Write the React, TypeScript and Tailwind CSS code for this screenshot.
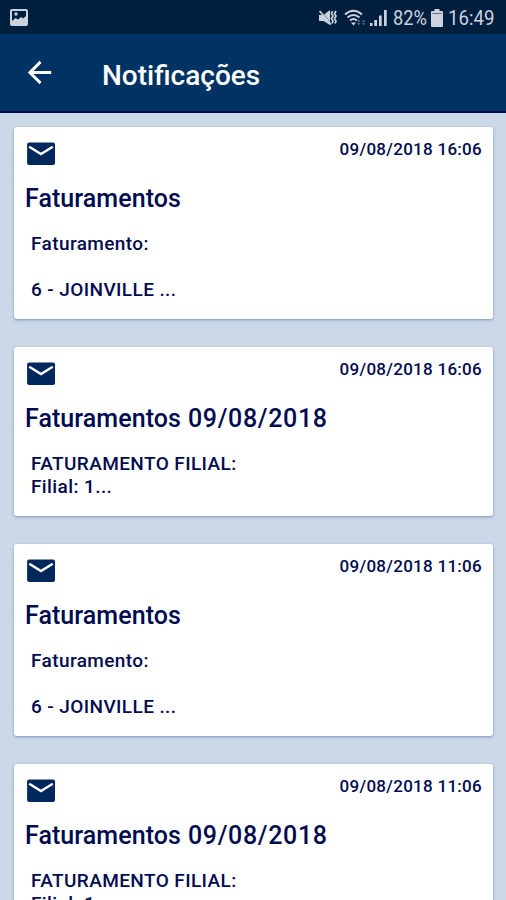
import { clsx } from 'clsx';

interface NotificationType {
  id: number;
  date: string;
  title: string;
  titleDate?: string;
  lines: string[];
  tall?: boolean;
}

const notifications: NotificationType[] = [
  { id: 1, date: '09/08/2018 16:06', title: 'Faturamentos', lines: ['Faturamento:', '', '6 - JOINVILLE ...'], tall: true },
  { id: 2, date: '09/08/2018 16:06', title: 'Faturamentos', titleDate: '09/08/2018', lines: ['FATURAMENTO FILIAL:', 'Filial: 1...'] },
  { id: 3, date: '09/08/2018 11:06', title: 'Faturamentos', lines: ['Faturamento:', '', '6 - JOINVILLE ...'], tall: true },
  { id: 4, date: '09/08/2018 11:06', title: 'Faturamentos', titleDate: '09/08/2018', lines: ['FATURAMENTO FILIAL:', 'Filial: 1...'] },
];

const StatusBar = () => (
  <div className="flex h-[34px] shrink-0 items-center bg-[#001f3f] pt-px pl-[10px] text-[#ccd3df]">
    <svg className="h-[17px] w-[18px] shrink-0" viewBox="0 0 18 17" fill="none">
      <rect x="1" y="1" width="16" height="15" rx="1" stroke="currentColor" strokeWidth="2" />
      <path d="M2 12l3.500-3 2.500 1.500L11 8l2 1.500L16 7v8H2z" fill="currentColor" />
      <circle cx="6" cy="5" r="1.700" fill="currentColor" />
    </svg>
    <svg className="ml-[290px] h-[18px] w-5 shrink-0" viewBox="0 0 20 18" fill="none" stroke="currentColor">
      <path d="M1 6h4.500L12 1v15l-6.500-4H1z" fill="currentColor" stroke="none" />
      <path d="M2.500 1.500l11 13" stroke="#4d6079" strokeWidth="0.8" />
      <path d="M1.500 2l11.500 13.500" strokeWidth="1.500" />
      <path d="M14.500 2L13.500 4.500l1.500 2.500-1.500 2.500 1.500 2.500-1 2.500M18 2l-1.500 2.500L18 7l-1.500 2.500L18 12l-1 2.500" strokeWidth="1.700" />
    </svg>
    <svg className="ml-[6px] h-[18px] w-[22px] shrink-0" viewBox="0 0 22 18" fill="none" stroke="currentColor" strokeWidth="2">
      <path d="M1 5.500q8.500-7.500 17 0M3.500 8.500q6-5 12 0M6 11.500q3.500-3 7 0" />
      <path d="M7 13.500h5L9.500 16.500z" fill="currentColor" stroke="none" />
      <path d="M13 13l1.800-2.500 1.800 2.500zM13 14l1.800 2.500 1.800-2.500zM18 13l1.600-2.500 1.600 2.500zM18 14l1.600 2.500 1.600-2.500z" fill="#506781" stroke="none" />
    </svg>
    <svg className="ml-[3px] h-[18px] w-[19px] shrink-0" viewBox="0 0 19 18" fill="currentColor">
      <path d="M1 14h2.500v3H1zM5.300 11h2.700v6H5.300zM10 6.500h2.700v10.500H10zM15 1h2.700v16H15z" />
    </svg>
    <span className="ml-[5px] w-[36px] shrink-0 origin-left scale-x-[0.87] text-[21px] leading-6">82%</span>
    <svg className="ml-[2px] h-[18px] w-3 shrink-0" viewBox="0 0 12 18" fill="currentColor">
      <path d="M3.500 0h5v2H11a1 1 0 0 1 1 1v14a1 1 0 0 1-1 1H1a1 1 0 0 1-1-1V3a1 1 0 0 1 1-1h2.500z" />
      <path d="M1.500 4.500h9" stroke="#5e7085" />
    </svg>
    <span className="ml-[5px] w-[48px] shrink-0 origin-left scale-x-[0.89] text-[21px] leading-6">16:49</span>
  </div>
);

const Header = () => (
  <header className="flex h-[79px] shrink-0 items-center border-b-2 border-[#000b57] bg-[#003264] pl-[22px] text-white">
    <svg className="h-[35px] w-[35px]" viewBox="0 0 24 24" fill="currentColor">
      <path d="M20 11H7.830l5.590-5.590L12 4l-8 8 8 8 1.410-1.410L7.830 13H20v-2z" />
    </svg>
    <h1 className="mt-[6px] ml-[45px] text-[28px] leading-8 font-medium">Notificações</h1>
  </header>
);

const NotificationCard = ({ item }: { item: NotificationType }) => {
  const { date, title, titleDate, lines, tall } = item;
  return (
    <div
      className={clsx(
        'shrink-0 rounded-[3px] bg-white pt-[10px] pr-[11px] pl-[10px] shadow-[0_1px_3px_rgba(40,65,120,0.45)]',
        tall ? 'h-48' : 'h-[169px]',
      )}
    >
      <div className="flex items-start justify-between">
        <svg className="h-[34px] w-[34px]" viewBox="0 0 24 24">
          <rect x="2.200" y="3.900" width="19.700" height="15.800" rx="1.400" fill="#00285c" />
          <path d="M3.700 6.900L12 12l8.300-5.100" fill="none" stroke="#fff" strokeWidth="1.700" />
        </svg>
        <span className="mt-[2px] text-[17px] leading-5 font-medium tracking-[0.28px]">{date}</span>
      </div>
      <h2 className="mt-[13px] flex gap-[7px] pl-px text-[25px] leading-[30px] font-medium">
        <span className="tracking-[0.07px]">{title}</span>
        {titleDate && <span className="tracking-[0.65px]">{titleDate}</span>}
      </h2>
      <div className="mt-[18px] pl-[7px] text-[19px] leading-[23px] font-medium tracking-[0.4px]">
        {lines.map((line, index) => (
          <p key={index} className="h-[23px]">{line}</p>
        ))}
      </div>
    </div>
  );
};

const App = () => (
  <div className="flex h-[900px] w-[506px] flex-col overflow-hidden bg-[#cad8e8] font-[Roboto,sans-serif]">
    <StatusBar />
    <Header />
    <main className="flex min-h-0 flex-1 flex-col gap-7 overflow-hidden pt-[14px] pr-[13px] pl-[14px] text-[#000b50]">
      {notifications.map((item) => (
        <NotificationCard key={item.id} item={item} />
      ))}
    </main>
  </div>
);

export default App;
